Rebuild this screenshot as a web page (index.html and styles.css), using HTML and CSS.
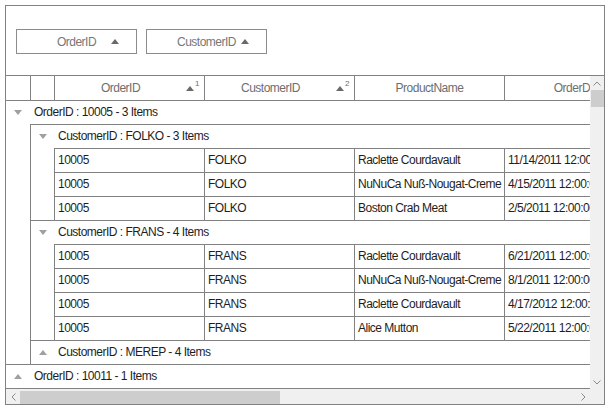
FILE: index.html
```html
<!DOCTYPE html>
<html>
<head>
<meta charset="utf-8">
<link rel="stylesheet" href="styles.css">
</head>
<body>
<div class="grid">
  <div class="droparea">
    <div class="gbtn"><span class="gtext">OrderID</span><span class="tri-up dark"></span></div>
    <div class="gbtn"><span class="gtext">CustomerID</span><span class="tri-up dark"></span></div>
  </div>
  <div class="main">
    <div class="content">
      <div class="header">
        <div class="hc ind1"></div>
        <div class="hc ind2"></div>
        <div class="hc col"><span class="ht">OrderID</span><span class="sort"><span class="tri-up dark"></span><sup class="num">1</sup></span></div>
        <div class="hc col"><span class="ht">CustomerID</span><span class="sort"><span class="tri-up dark"></span><sup class="num">2</sup></span></div>
        <div class="hc col"><span class="ht">ProductName</span></div>
        <div class="hc col"><span class="ht">OrderDate</span></div>
      </div>
      <div class="group">
        <div class="gcap"><span class="exp l1"><span class="tri-down"></span></span><span class="captext">OrderID : 10005 - 3 Items</span></div>
        <div class="gchildren">
          <div class="subgroup">
            <div class="gcap"><span class="exp l2"><span class="tri-down"></span></span><span class="captext">CustomerID : FOLKO - 3 Items</span></div>
            <div class="rows">
              <div class="row"><div class="cell">10005</div><div class="cell">FOLKO</div><div class="cell">Raclette Courdavault</div><div class="cell">11/14/2011 12:00:00 AM</div></div>
              <div class="row"><div class="cell">10005</div><div class="cell">FOLKO</div><div class="cell">NuNuCa Nuß-Nougat-Creme</div><div class="cell">4/15/2011 12:00:00 AM</div></div>
              <div class="row"><div class="cell">10005</div><div class="cell">FOLKO</div><div class="cell">Boston Crab Meat</div><div class="cell">2/5/2011 12:00:00 AM</div></div>
            </div>
          </div>
          <div class="subgroup">
            <div class="gcap"><span class="exp l2"><span class="tri-down"></span></span><span class="captext">CustomerID : FRANS - 4 Items</span></div>
            <div class="rows">
              <div class="row"><div class="cell">10005</div><div class="cell">FRANS</div><div class="cell">Raclette Courdavault</div><div class="cell">6/21/2011 12:00:00 AM</div></div>
              <div class="row"><div class="cell">10005</div><div class="cell">FRANS</div><div class="cell">NuNuCa Nuß-Nougat-Creme</div><div class="cell">8/1/2011 12:00:00 AM</div></div>
              <div class="row"><div class="cell">10005</div><div class="cell">FRANS</div><div class="cell">Raclette Courdavault</div><div class="cell">4/17/2012 12:00:00 AM</div></div>
              <div class="row"><div class="cell">10005</div><div class="cell">FRANS</div><div class="cell">Alice Mutton</div><div class="cell">5/22/2011 12:00:00 AM</div></div>
            </div>
          </div>
          <div class="subgroup">
            <div class="gcap"><span class="exp l2"><span class="tri-up"></span></span><span class="captext">CustomerID : MEREP - 4 Items</span></div>
          </div>
        </div>
      </div>
      <div class="group">
        <div class="gcap"><span class="exp l1"><span class="tri-up"></span></span><span class="captext">OrderID : 10011 - 1 Items</span></div>
      </div>
    </div>
    <div class="vscroll">
      <div class="sbtn"><svg width="8" height="5" viewBox="0 0 8 5"><path d="M0.5 4.5 L4 1 L7.5 4.5" fill="none" stroke="#8a8a8a" stroke-width="1"/></svg></div>
      <div class="vthumb"></div>
      <div class="vtrack"></div>
      <div class="sbtn"><svg width="8" height="5" viewBox="0 0 8 5"><path d="M0.5 0.5 L4 4 L7.5 0.5" fill="none" stroke="#8a8a8a" stroke-width="1"/></svg></div>
    </div>
    <div class="hscroll">
      <div class="hbtn"><svg width="5" height="8" viewBox="0 0 5 8"><path d="M4.5 0.5 L1 4 L4.5 7.5" fill="none" stroke="#8a8a8a" stroke-width="1"/></svg></div>
      <div class="hthumb"></div>
      <div class="htrack"></div>
      <div class="hbtn"><svg width="5" height="8" viewBox="0 0 5 8"><path d="M0.5 0.5 L4 4 L0.5 7.5" fill="none" stroke="#8a8a8a" stroke-width="1"/></svg></div>
    </div>
    <div class="corner"></div>
  </div>
</div>
</body>
</html>
```

FILE: styles.css
```css
body {
  margin: 0;
  background: #fff;
  font-family: "Liberation Sans", Arial, sans-serif;
  font-size: 12px;
  letter-spacing: -0.5px;
  color: #1e1e1e;
}

.grid {
  margin: 5px;
  width: 600px;
  height: 400px;
  box-sizing: border-box;
  border: 1px solid #828282;
  display: flex;
  flex-direction: column;
}

.droparea {
  height: 69px;
  box-sizing: border-box;
  padding: 23px 0 0 10px;
  display: flex;
  gap: 9px;
  align-items: flex-start;
}

.gbtn {
  width: 121px;
  height: 25px;
  box-sizing: border-box;
  border: 1px solid #8c8c8c;
  display: grid;
  align-items: center;
  color: #777;
}

.gbtn > * {
  grid-area: 1 / 1;
}

.gtext {
  justify-self: center;
}

.gbtn .tri-up {
  justify-self: start;
  margin-left: 94px;
}

.main {
  flex: 1;
  border-top: 1px solid #828282;
  display: grid;
  grid-template-columns: 584px 14px;
  grid-template-rows: 313px 15px;
}

.content {
  overflow: hidden;
  border-bottom: 1px solid #828282;
  white-space: nowrap;
}

.header {
  display: flex;
  height: 24px;
  border-bottom: 1px solid #828282;
}

.hc {
  flex: none;
  border-right: 1px solid #828282;
  display: flex;
  align-items: center;
  color: #6e6e6e;
}

.ind1 { width: 24px; }
.ind2 { width: 23px; }
.col { width: 149px; }

.ht {
  flex: 1;
  text-align: center;
}

.sort {
  width: 18px;
  height: 100%;
  display: flex;
  align-items: center;
}

.num {
  font-size: 8px;
  letter-spacing: 0;
  align-self: flex-start;
  margin: 4px 0 0 1px;
  line-height: 1;
  color: #6e6e6e;
}

.tri-up, .tri-down {
  display: inline-block;
  width: 0;
  height: 0;
  border-left: 4px solid transparent;
  border-right: 4px solid transparent;
}

.tri-up { border-bottom: 5px solid #a0a0a0; }
.tri-down { border-top: 5px solid #a0a0a0; }
.tri-up.dark { border-bottom-color: #6a6a6a; }

.group + .group {
  border-top: 1px solid #828282;
}

.gcap {
  height: 23px;
  display: flex;
  align-items: center;
}

.exp {
  flex: none;
  display: flex;
  justify-content: center;
  align-items: center;
}

.exp.l1 { width: 24px; }
.exp.l2 { width: 23px; }

.captext {
  margin-left: 4px;
  padding-bottom: 1px;
}

.gchildren {
  margin-left: 24px;
  border-left: 1px solid #828282;
  border-top: 1px solid #828282;
}

.subgroup + .subgroup {
  border-top: 1px solid #828282;
}

.rows {
  margin-left: 23px;
  border-left: 1px solid #828282;
  border-top: 1px solid #828282;
}

.row {
  display: flex;
  height: 23px;
}

.row + .row {
  border-top: 1px solid #828282;
}

.cell {
  flex: none;
  width: 146px;
  padding: 0 0 1px 3px;
  border-right: 1px solid #828282;
  display: flex;
  align-items: center;
  overflow: hidden;
}

.vscroll {
  background: #f0f0f0;
  display: flex;
  flex-direction: column;
}

.sbtn {
  height: 14px;
  flex: none;
  display: flex;
  align-items: center;
  justify-content: center;
}

.vthumb {
  height: 17px;
  flex: none;
  margin: 0 0 0 1px;
  background: #cdcdcd;
}

.vtrack { flex: 1; }

.hscroll {
  background: #f0f0f0;
  display: flex;
  align-items: stretch;
}

.hbtn {
  width: 14px;
  flex: none;
  display: flex;
  align-items: center;
  justify-content: center;
}

.hthumb {
  width: 260px;
  flex: none;
  margin: 2px 0 0 0;
  background: #cdcdcd;
}

.htrack { flex: 1; }

.corner {
  background: #f0f0f0;
}
```
